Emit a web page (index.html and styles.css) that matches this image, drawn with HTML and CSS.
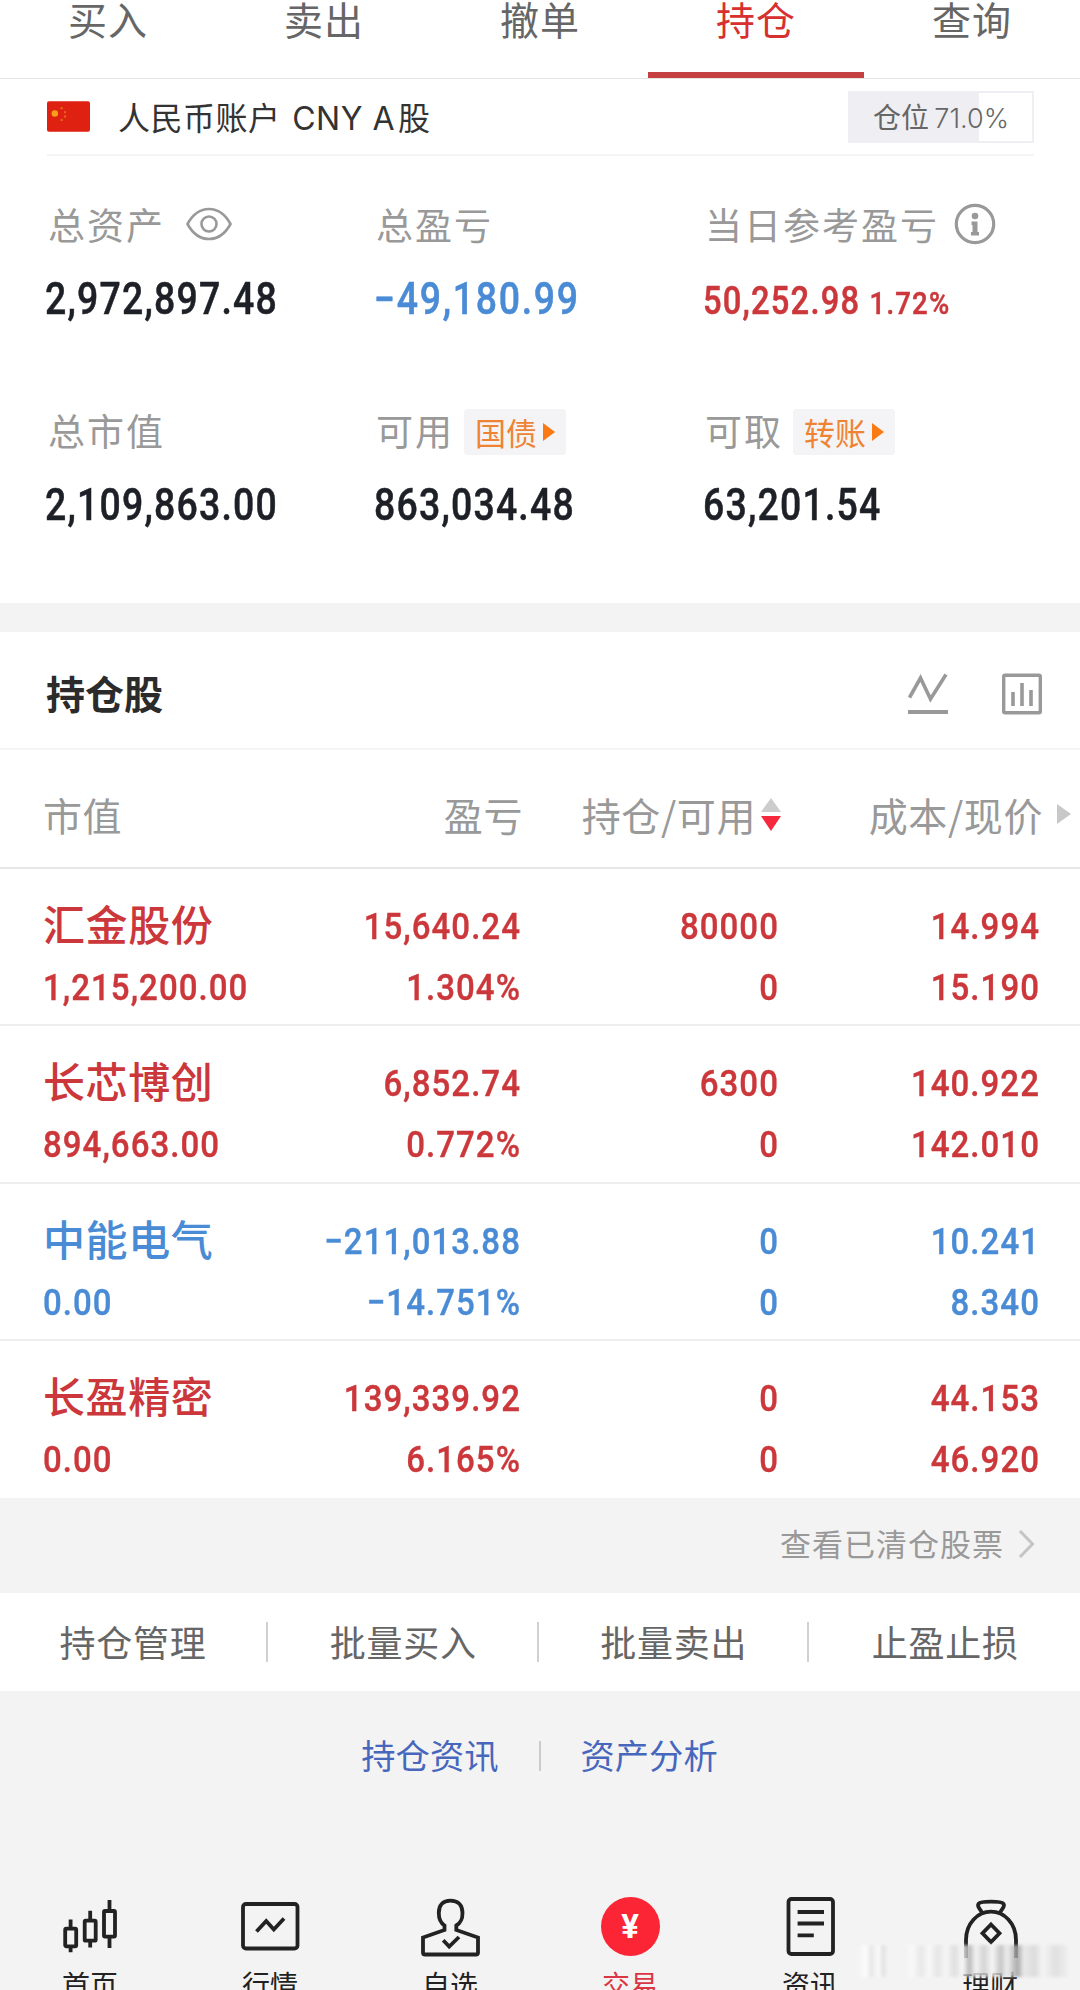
FILE: index.html
```
<!DOCTYPE html>
<html lang="zh-CN">
<head>
    <meta charset="UTF-8">
    <title>持仓</title>
    <link rel="stylesheet" href="styles.css">
</head>
<body>
    <div class="tabs">
        <div class="tab">买入</div>
        <div class="tab">卖出</div>
        <div class="tab">撤单</div>
        <div class="tab active">持仓</div>
        <div class="tab">查询</div>
    </div>

    <div class="overview">
        <div class="account">
            <svg class="flag" width="43" height="31" viewBox="0 0 44 31">
                <rect width="44" height="31" rx="2" fill="#de2110"/>
                <circle cx="8" cy="12.500" r="3.3" fill="#f8a01c"/>
                <g fill="#e8651c">
                    <circle cx="15" cy="7" r="1.2"/>
                    <circle cx="18.500" cy="11" r="1.2"/>
                    <circle cx="18.500" cy="15.500" r="1.2"/>
                    <circle cx="15" cy="19" r="1.2"/>
                </g>
            </svg>
            <span class="account-name">人民币账户 <span class="en">CNY A</span>股</span>
            <div class="position">
                <div class="position-bar" style="width: 71%"></div>
                <span class="position-text">仓位 <span class="en">71.0%</span></span>
            </div>
        </div>

        <div class="assets">
            <div class="asset">
                <div class="asset-label">总资产
                    <svg class="eye" width="46" height="34" viewBox="0 0 46 34" fill="none" stroke="#999" stroke-width="2.6">
                        <path d="M1.500 17C7 7 14 2 23 2S39 7 44.500 17C39 27 32 32 23 32S7 27 1.500 17Z"/>
                        <circle cx="23" cy="17" r="7.500"/>
                    </svg>
                </div>
                <div class="asset-value">2,972,897.48</div>
            </div>
            <div class="asset">
                <div class="asset-label">总盈亏</div>
                <div class="asset-value blue">−49,180.99</div>
            </div>
            <div class="asset">
                <div class="asset-label">当日参考盈亏
                    <svg class="info" width="42" height="42" viewBox="0 0 42 42">
                        <circle cx="21" cy="21" r="18.700" fill="none" stroke="#999" stroke-width="3.2"/>
                        <circle cx="21" cy="13" r="3.3" fill="#999"/>
                        <path d="M17.500 18.500h6v10.500h1.500v3.500h-8v-3.500h1.500v-7h-1Z" fill="#999"/>
                    </svg>
                </div>
                <div class="asset-value red today">50,252.98 <span class="percent">1.72%</span></div>
            </div>
            <div class="asset">
                <div class="asset-label">总市值</div>
                <div class="asset-value">2,109,863.00</div>
            </div>
            <div class="asset">
                <div class="asset-label">可用 <span class="tag">国债<i class="tag-arrow"></i></span></div>
                <div class="asset-value">863,034.48</div>
            </div>
            <div class="asset">
                <div class="asset-label">可取 <span class="tag">转账<i class="tag-arrow"></i></span></div>
                <div class="asset-value">63,201.54</div>
            </div>
        </div>
    </div>

    <div class="holdings">
        <div class="holdings-title">
            <h2>持仓股</h2>
            <svg class="title-icon" width="40" height="42" viewBox="0 0 40 42" fill="none" stroke="#999">
                <path d="M1.500 24.500 12.500 5 22.500 26 38 1.500" stroke-width="3.6"/>
                <path d="M0 39h40" stroke-width="4"/>
            </svg>
            <svg class="title-icon" width="40" height="42" viewBox="0 0 40 42" fill="none" stroke="#999">
                <rect x="1.700" y="2.200" width="36.600" height="37.600" rx="1.500" stroke-width="3.4"/>
                <path d="M11 19v14M20 10v23M29 17v16" stroke-width="3.6"/>
            </svg>
        </div>

        <div class="row head">
            <div class="cell">市值</div>
            <div class="cell">盈亏</div>
            <div class="cell">持仓/可用<span class="sort"><i class="sort-up"></i><i class="sort-down"></i></span></div>
            <div class="cell">成本/现价<i class="more"></i></div>
        </div>

        <div class="row red">
            <div class="cell"><div class="name">汇金股份</div><div class="num">1,215,200.00</div></div>
            <div class="cell"><div class="num">15,640.24</div><div class="num">1.304%</div></div>
            <div class="cell"><div class="num">80000</div><div class="num">0</div></div>
            <div class="cell"><div class="num">14.994</div><div class="num">15.190</div></div>
        </div>
        <div class="row red">
            <div class="cell"><div class="name">长芯博创</div><div class="num">894,663.00</div></div>
            <div class="cell"><div class="num">6,852.74</div><div class="num">0.772%</div></div>
            <div class="cell"><div class="num">6300</div><div class="num">0</div></div>
            <div class="cell"><div class="num">140.922</div><div class="num">142.010</div></div>
        </div>
        <div class="row blue">
            <div class="cell"><div class="name">中能电气</div><div class="num">0.00</div></div>
            <div class="cell"><div class="num">−211,013.88</div><div class="num">−14.751%</div></div>
            <div class="cell"><div class="num">0</div><div class="num">0</div></div>
            <div class="cell"><div class="num">10.241</div><div class="num">8.340</div></div>
        </div>
        <div class="row red">
            <div class="cell"><div class="name">长盈精密</div><div class="num">0.00</div></div>
            <div class="cell"><div class="num">139,339.92</div><div class="num">6.165%</div></div>
            <div class="cell"><div class="num">0</div><div class="num">0</div></div>
            <div class="cell"><div class="num">44.153</div><div class="num">46.920</div></div>
        </div>
    </div>

    <div class="cleared">查看已清仓股票
        <svg width="17" height="30" viewBox="0 0 17 30" fill="none" stroke="#c4c4c4" stroke-width="3">
            <path d="M2 2 14.500 15 2 28"/>
        </svg>
    </div>

    <div class="actions">
        <div class="action">持仓管理</div>
        <div class="action">批量买入</div>
        <div class="action">批量卖出</div>
        <div class="action">止盈止损</div>
    </div>

    <div class="links">
        <a>持仓资讯</a>
        <span class="links-line"></span>
        <a>资产分析</a>
    </div>

    <div class="nav">
        <div class="nav-item">
            <svg class="nav-icon" viewBox="0 0 64 64">
                <path d="M12.600 25.500V34M12.600 52v6.300M32.200 16.700V27M32.200 46.500v7M51.500 6v10M51.500 43v11"/>
                <rect x="7.200" y="34.700" width="11" height="17.600" rx="1"/>
                <rect x="26.700" y="26.700" width="11" height="20" rx="1"/>
                <rect x="46" y="17" width="11" height="25.600" rx="1"/>
            </svg>
            <span>首页</span>
        </div>
        <div class="nav-item">
            <svg class="nav-icon" viewBox="0 0 64 64">
                <rect x="5" y="10" width="54.500" height="44.500" rx="3"/>
                <path d="M18.500 37.500 28.200 27 35.800 35.500 46 24.500"/>
            </svg>
            <span>行情</span>
        </div>
        <div class="nav-item">
            <svg class="nav-icon" viewBox="0 0 64 64">
                <path d="M26.500 36v-4.500C22 28.500 20.800 25 20.800 19 20.800 11 25 6.700 32.500 6.700S44.500 11 44.500 19c0 6-1.200 9.500-6.200 12.500V36L60 43.500V58.500q0 2-2 2H7q-2 0-2-2V43.500Z"/>
                <path d="M25.200 46.300 31.200 52.500 41 43"/>
            </svg>
            <span>自选</span>
        </div>
        <div class="nav-item current">
            <div class="yuan"><b>¥</b></div>
            <span>交易</span>
        </div>
        <div class="nav-item">
            <svg class="nav-icon" viewBox="0 0 64 64">
                <rect x="10.500" y="5" width="44.500" height="55" rx="3"/>
                <path d="M19.600 18H46M19.600 29.500H46M19.600 41.300H35.800"/>
            </svg>
            <span>资讯</span>
        </div>
        <div class="nav-item">
            <svg class="nav-icon" viewBox="0 0 64 64">
                <path d="M24 18.500C22 14.500 18.500 12.500 20.500 9.800 23 7 43 7 45.500 9.800 47.500 12.500 44 14.500 42 18.500"/>
                <path d="M8 64V46C8 29 20 17.700 33 17.700S58 29 58 46V64"/>
                <path d="M33 30.500 41.500 39.300 33 48 24.500 39.300Z"/>
            </svg>
            <span>理财</span>
        </div>
        <div class="watermark"></div>
    </div>
</body>
</html>
```
FILE: styles.css
```
* {
    box-sizing: border-box;
}

body {
    margin: 0;
    width: 1080px;
    height: 1990px;
    overflow: hidden;
    background-color: #f3f3f3;
    font-family: "Noto Sans CJK SC", sans-serif;
    color: #666;
}

.red {
    color: #cb373a;
}

.blue {
    color: #4a8bd6;
}

.en {
    font-family: Inter, "Noto Sans CJK SC", sans-serif;
}

/* 顶部标签 */
.tabs {
    display: flex;
    height: 79px;
    background-color: #fff;
    border-bottom: 1px solid #e6e6e6;
}

.tab {
    width: 216px;
    height: 78px;
    text-align: center;
    font-size: 39px;
    line-height: 36px;
    letter-spacing: 1px;
}

.tab.active {
    color: #d8302f;
    border-bottom: 6px solid #c54141;
}

.overview,
.holdings {
    background-color: #fff;
}

/* 账户 */
.account {
    display: flex;
    align-items: center;
    height: 77px;
    margin: 0 46px 0 47px;
    border-bottom: 2px solid #f5f5f5;
}

.account-name {
    margin-left: 28px;
    padding-bottom: 2px;
    font-size: 32px;
    letter-spacing: 0.5px;
    word-spacing: 4px;
    color: #333;
}

.account-name .en {
    margin-right: 3px;
    word-spacing: 0;
}

.position {
    position: relative;
    width: 186px;
    height: 52px;
    margin-left: auto;
    border: 2px solid #efeef2;
}

.position-bar {
    height: 100%;
    background-color: #efeef2;
}

.position-text {
    position: absolute;
    top: 0;
    left: 0;
    width: 100%;
    text-align: center;
    font-size: 28px;
    line-height: 46px;
    word-spacing: -1px;
}

.position-text .en {
    font-size: 27px;
    font-weight: 300;
}

/* 资产 */
.assets {
    display: grid;
    grid-template-columns: 329px 329px 1fr;
    grid-template-rows: 206px 1fr;
    height: 447px;
    padding: 43px 0 0 45px;
}

.asset-label {
    display: flex;
    align-items: center;
    height: 50px;
    padding-left: 2px;
    font-size: 37px;
    letter-spacing: 2px;
    color: #999;
}

.asset:nth-child(3n + 1) .asset-label {
    padding-left: 3px;
}

.eye {
    margin-left: 21px;
}

.info {
    margin-left: 15px;
}

/* 数字用窄体 */
.asset-value {
    margin-top: 21px;
    height: 58px;
    font-family: Roboto, sans-serif;
    font-size: 43.5px;
    font-weight: 500;
    line-height: 59px;
    letter-spacing: 1.4px;
    white-space: nowrap;
    color: #1d2026;
    transform: scaleX(0.86);
    transform-origin: left;
    -webkit-text-stroke: 0.5px;
}

.asset-value.red {
    color: #cb373a;
}

.asset-value.blue {
    color: #4a8bd6;
    letter-spacing: 2px;
}

.asset-value.today {
    font-size: 38px;
    line-height: 62px;
    letter-spacing: 1.4px;
    word-spacing: 0;
}

.percent {
    font-size: 32px;
    letter-spacing: 1.4px;
}

.tag {
    display: flex;
    align-items: center;
    height: 46px;
    margin: 3px 0 0 10px;
    padding: 0 11px;
    border-radius: 4px;
    background-color: #f4f3f5;
    font-size: 31px;
    letter-spacing: 0;
    color: #ee8433;
}

.tag-arrow {
    margin-left: 6px;
    border-left: 12px solid #fb7a14;
    border-top: 9px solid transparent;
    border-bottom: 9px solid transparent;
}

/* 持仓股 */
.holdings {
    margin-top: 29px;
    height: 866px;
}

.holdings-title {
    display: flex;
    align-items: center;
    height: 118px;
    padding: 7px 38px 0 46px;
    border-bottom: 2px solid #f5f5f5;
}

.holdings-title h2 {
    margin: 0 auto 4px 0;
    font-size: 39px;
    font-weight: 700;
    color: #2b2b2b;
}

.title-icon {
    margin-left: 54px;
}

.row {
    display: grid;
    grid-template-columns: 221px 256px 258px 261px;
    height: 157.25px;
    padding: 26px 0 0 43px;
    border-bottom: 2px solid #eee;
    text-align: right;
}

.row:last-child {
    border-bottom: none;
}

.row.head {
    height: 119px;
    padding-top: 0;
    border-bottom: 2px solid #e6e6e6;
    line-height: 128px;
    font-size: 39px;
    letter-spacing: 0.6px;
    color: #999;
}

.cell {
    white-space: nowrap;
}

.cell:first-child {
    text-align: left;
}

.head .cell {
    display: flex;
    justify-content: flex-end;
    align-items: center;
    margin-right: -3px;
}

.head .cell:first-child {
    justify-content: flex-start;
}

.name {
    height: 61px;
    font-size: 42px;
    font-weight: 500;
    line-height: 55px;
    letter-spacing: 0.6px;
}

.num {
    height: 61px;
    margin-right: -1px;
    font-family: Roboto, sans-serif;
    font-size: 37.5px;
    font-weight: 500;
    line-height: 62px;
    letter-spacing: 1.2px;
    transform: scaleX(0.88);
    transform-origin: right;
    -webkit-text-stroke: 0.4px;
}

.name + .num {
    transform-origin: left;
}

.sort {
    display: flex;
    flex-direction: column;
    gap: 4px;
    margin-left: 5px;
}

.sort-up {
    border: 10px solid transparent;
    border-top: none;
    border-bottom: 14px solid #ccc;
}

.sort-down {
    border: 10px solid transparent;
    border-bottom: none;
    border-top: 15px solid #f5283c;
}

.more {
    margin: 0 -29px 0 14px;
    border-left: 14px solid #c8c8c8;
    border-top: 10px solid transparent;
    border-bottom: 10px solid transparent;
}

.cleared {
    display: flex;
    justify-content: flex-end;
    align-items: center;
    height: 95px;
    padding: 0 45px 6px 0;
    font-size: 31px;
    letter-spacing: 1px;
    color: #999;
}

.cleared svg {
    margin: 3px 0 0 14px;
}

/* 操作按钮 */
.actions {
    display: flex;
    align-items: center;
    height: 98px;
    background-color: #fff;
}

.action {
    width: 270.5px;
    height: 40px;
    border-right: 2px solid #d0d0d0;
    text-align: center;
    text-indent: 2px;
    font-size: 36px;
    line-height: 38px;
    letter-spacing: 0.7px;
}

.action:first-child {
    width: 268px;
    text-indent: 0;
}

.action:last-child {
    border-right: none;
}

.links {
    display: flex;
    justify-content: center;
    align-items: center;
    height: 130px;
    padding-right: 1px;
    font-size: 34.3px;
    line-height: 50px;
    color: #4767bd;
}

.links a {
    padding-bottom: 4px;
}

.links-line {
    width: 2px;
    height: 30px;
    margin: 0 40px;
    background-color: #ccc;
}

/* 底部导航 */
.nav {
    position: relative;
    display: flex;
    padding-top: 73px;
    color: #222;
}

.nav-item {
    display: flex;
    flex-direction: column;
    align-items: center;
    width: 180px;
    font-size: 28px;
    line-height: 52px;
}

.nav-icon {
    width: 64px;
    height: 64px;
    fill: none;
    stroke: #222;
    stroke-width: 3.8;
}

.nav-item.current {
    color: #dc3545;
}

.yuan {
    width: 59px;
    height: 59px;
    margin: 3px 0 2px;
    border-radius: 50%;
    background-color: #fb2535;
    color: #fff;
    text-align: center;
    font-family: Roboto, sans-serif;
    font-size: 33px;
    line-height: 59px;
}

.watermark {
    position: absolute;
    top: 124px;
    left: 858px;
    width: 210px;
    height: 32px;
    background: linear-gradient(90deg, #f3f3f3 0, #fff 4%, #e4e4e4 6%, #fdfdfd 10%, #dcdcdc 12%, #f3f3f3 14% 22%, #fafafa 26%, #e6e6e6 30%, #fafafa 34%, #e2e2e2 38%, #f8f8f8 42%, #dadada 46%, #fafafa 50%, #aaa 53%, #f5f5f5 56%, #ccc 60%, #f8f8f8 64%, #bbb 68%, #eee 71%, #999 76%, #e8e8e8 79%, #d6d6d6 84%, #f5f5f5 88%, #dcdcdc 94%, #eee 100%);
    opacity: 0.8;
    filter: blur(1.5px);
}
```
